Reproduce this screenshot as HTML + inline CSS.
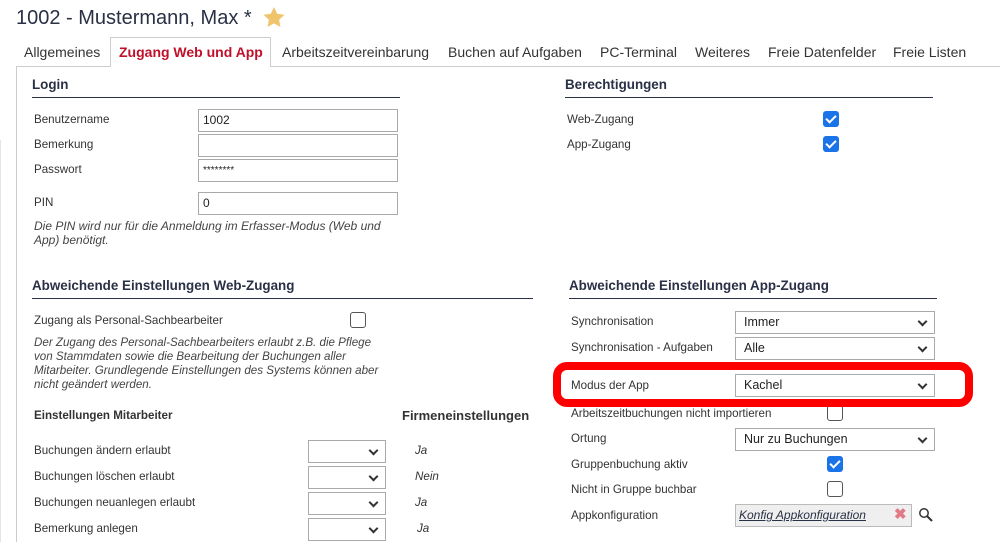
<!DOCTYPE html>
<html><head><meta charset="utf-8"><style>
*{margin:0;padding:0;box-sizing:border-box}
body{width:1000px;height:542px;overflow:hidden;background:#fff;font-family:"Liberation Sans",Arial,sans-serif;color:#333;position:relative;font-size:11.6px}
.a{position:absolute;white-space:nowrap}
.t{position:absolute;line-height:14px;transform:translateY(-6px);white-space:nowrap}
.h{position:absolute;font-weight:bold;font-size:13.4px;color:#2a3045;line-height:16px;transform:translateY(-8px);white-space:nowrap}
.ln{position:absolute;height:1px;background:#2a3045}
.in{position:absolute;border:1px solid #aaa;background:#fff;height:23px;font-size:12px;line-height:21px;padding-left:4px;color:#222}
.sel{position:absolute;border:1px solid #aaa;background:#fff;height:23px;font-size:12.5px;line-height:21px;padding-left:8px;color:#222}
.sel:after{content:"";position:absolute;right:8px;top:6px;width:5px;height:5px;border-right:2px solid #333;border-bottom:2px solid #333;transform:rotate(45deg)}
.cb{position:absolute;width:16px;height:16px;border:1px solid #555;border-radius:3px;background:#fff}
.ck{position:absolute;width:16px;height:16px;border-radius:3px;background:#1a73e8}
.ck:after{content:"";position:absolute;left:5px;top:2px;width:4px;height:8px;border-right:2px solid #fff;border-bottom:2px solid #fff;transform:rotate(45deg)}
.it{position:absolute;font-style:italic;font-size:11.6px;color:#444;line-height:14px;white-space:nowrap}
.tab{position:absolute;top:44px;font-size:14px;color:#333;line-height:16px;white-space:nowrap}
</style></head><body>
<div class="a" style="left:16px;top:6px;font-size:20px;color:#2a3045;line-height:24px">1002 - Mustermann, Max *</div>
<svg class="a" style="left:262px;top:6px" width="24" height="23" viewBox="0 0 24 23"><path d="M12 1l3.2 6.8 7.3.9-5.4 5 1.4 7.3L12 17.4 5.5 21l1.4-7.3-5.4-5 7.3-.9z" fill="#f0c46a"/></svg>
<div class="a" style="left:16px;top:66px;width:984px;height:1px;background:#ccc"></div>
<div class="a" style="left:16px;top:66px;width:1px;height:476px;background:#ccc"></div>
<div class="a" style="left:0;top:140px;width:1px;height:402px;background:#e4e4e4"></div>
<div class="a" style="left:110px;top:37px;width:161px;height:30px;border:1px solid #ccc;border-bottom:none;background:#fff"></div>
<div class="tab" style="left:24px">Allgemeines</div>
<div class="tab" style="left:119px;color:#c0102a;font-weight:bold">Zugang Web und App</div>
<div class="tab" style="left:282px">Arbeitszeitvereinbarung</div>
<div class="tab" style="left:448px">Buchen auf Aufgaben</div>
<div class="tab" style="left:600px">PC-Terminal</div>
<div class="tab" style="left:695px">Weiteres</div>
<div class="tab" style="left:768px">Freie Datenfelder</div>
<div class="tab" style="left:893px">Freie Listen</div>

<div class="h" style="left:32px;top:85px">Login</div>
<div class="ln" style="left:32px;top:97px;width:368px"></div>
<div class="t" style="left:34px;top:119px">Benutzername</div>
<div class="t" style="left:34px;top:144px">Bemerkung</div>
<div class="t" style="left:34px;top:169px">Passwort</div>
<div class="t" style="left:34px;top:202px">PIN</div>
<div class="in" style="left:198px;top:109px;width:200px">1002</div>
<div class="in" style="left:198px;top:134px;width:200px"></div>
<div class="in" style="left:198px;top:159px;width:200px;font-size:10px">********</div>
<div class="in" style="left:198px;top:192px;width:200px">0</div>
<div class="it" style="left:34px;top:219px;font-size:12px">Die PIN wird nur für die Anmeldung im Erfasser-Modus (Web und<br>App) benötigt.</div>

<div class="h" style="left:565px;top:85px">Berechtigungen</div>
<div class="ln" style="left:565px;top:97px;width:368px"></div>
<div class="t" style="left:567px;top:119px">Web-Zugang</div>
<div class="t" style="left:567px;top:144px">App-Zugang</div>
<div class="ck" style="left:823px;top:111px"></div>
<div class="ck" style="left:823px;top:136px"></div>

<div class="h" style="left:32px;top:286px">Abweichende Einstellungen Web-Zugang</div>
<div class="ln" style="left:32px;top:298px;width:501px"></div>
<div class="t" style="left:34px;top:320px">Zugang als Personal-Sachbearbeiter</div>
<div class="cb" style="left:350px;top:312px"></div>
<div class="it" style="left:34px;top:336px">Der Zugang des Personal-Sachbearbeiters erlaubt z.B. die Pflege<br>von Stammdaten sowie die Bearbeitung der Buchungen aller<br>Mitarbeiter. Grundlegende Einstellungen des Systems können aber<br>nicht geändert werden.</div>
<div class="t" style="left:34px;top:415px;font-weight:bold;font-size:11.6px">Einstellungen Mitarbeiter</div>
<div class="t" style="left:402px;top:415px;font-weight:bold;font-size:13px">Firmeneinstellungen</div>
<div class="t" style="left:34px;top:450px">Buchungen ändern erlaubt</div>
<div class="t" style="left:34px;top:476px">Buchungen löschen erlaubt</div>
<div class="t" style="left:34px;top:502px">Buchungen neuanlegen erlaubt</div>
<div class="t" style="left:34px;top:528px">Bemerkung anlegen</div>
<div class="sel" style="left:308px;top:440px;width:78px"></div>
<div class="sel" style="left:308px;top:466px;width:78px"></div>
<div class="sel" style="left:308px;top:492px;width:78px"></div>
<div class="sel" style="left:308px;top:518px;width:78px"></div>
<div class="t" style="left:415px;top:450px;font-style:italic">Ja</div>
<div class="t" style="left:415px;top:476px;font-style:italic">Nein</div>
<div class="t" style="left:415px;top:502px;font-style:italic">Ja</div>
<div class="t" style="left:417px;top:528px;font-style:italic">Ja</div>

<div class="h" style="left:569px;top:286px">Abweichende Einstellungen App-Zugang</div>
<div class="ln" style="left:569px;top:298px;width:368px"></div>
<div class="t" style="left:571px;top:321px">Synchronisation</div>
<div class="t" style="left:571px;top:347px">Synchronisation - Aufgaben</div>
<div class="t" style="left:571px;top:385px">Modus der App</div>
<div class="t" style="left:571px;top:413px">Arbeitszeitbuchungen nicht importieren</div>
<div class="t" style="left:571px;top:438px">Ortung</div>
<div class="t" style="left:571px;top:464px">Gruppenbuchung aktiv</div>
<div class="t" style="left:571px;top:489px">Nicht in Gruppe buchbar</div>
<div class="t" style="left:571px;top:515px">Appkonfiguration</div>
<div class="sel" style="left:735px;top:311px;width:200px">Immer</div>
<div class="sel" style="left:735px;top:337px;width:200px">Alle</div>
<div class="sel" style="left:735px;top:374px;width:200px">Kachel</div>
<div class="cb" style="left:827px;top:405px"></div>
<div class="sel" style="left:735px;top:428px;width:200px">Nur zu Buchungen</div>
<div class="ck" style="left:827px;top:456px"></div>
<div class="cb" style="left:827px;top:481px"></div>
<div class="a" style="left:735px;top:504px;width:177px;height:23px;border:1px solid #bbb;background:#efefef;font-style:italic;text-decoration:underline;color:#2a3045;padding-left:3px;line-height:21px;font-size:12px">Konfig Appkonfiguration</div>
<div class="a" style="left:894px;top:506px;color:#e07a86;font-size:15px;font-weight:bold;line-height:18px">✖</div>
<svg class="a" style="left:918px;top:507px" width="16" height="16" viewBox="0 0 16 16"><circle cx="6" cy="6" r="4.2" fill="none" stroke="#333" stroke-width="1.5"/><path d="M9 9l5 5" stroke="#333" stroke-width="2"/></svg>

<div class="a" style="left:553px;top:362px;width:420px;height:45px;border:8px solid #f00;border-radius:14px"></div>
</body></html>
